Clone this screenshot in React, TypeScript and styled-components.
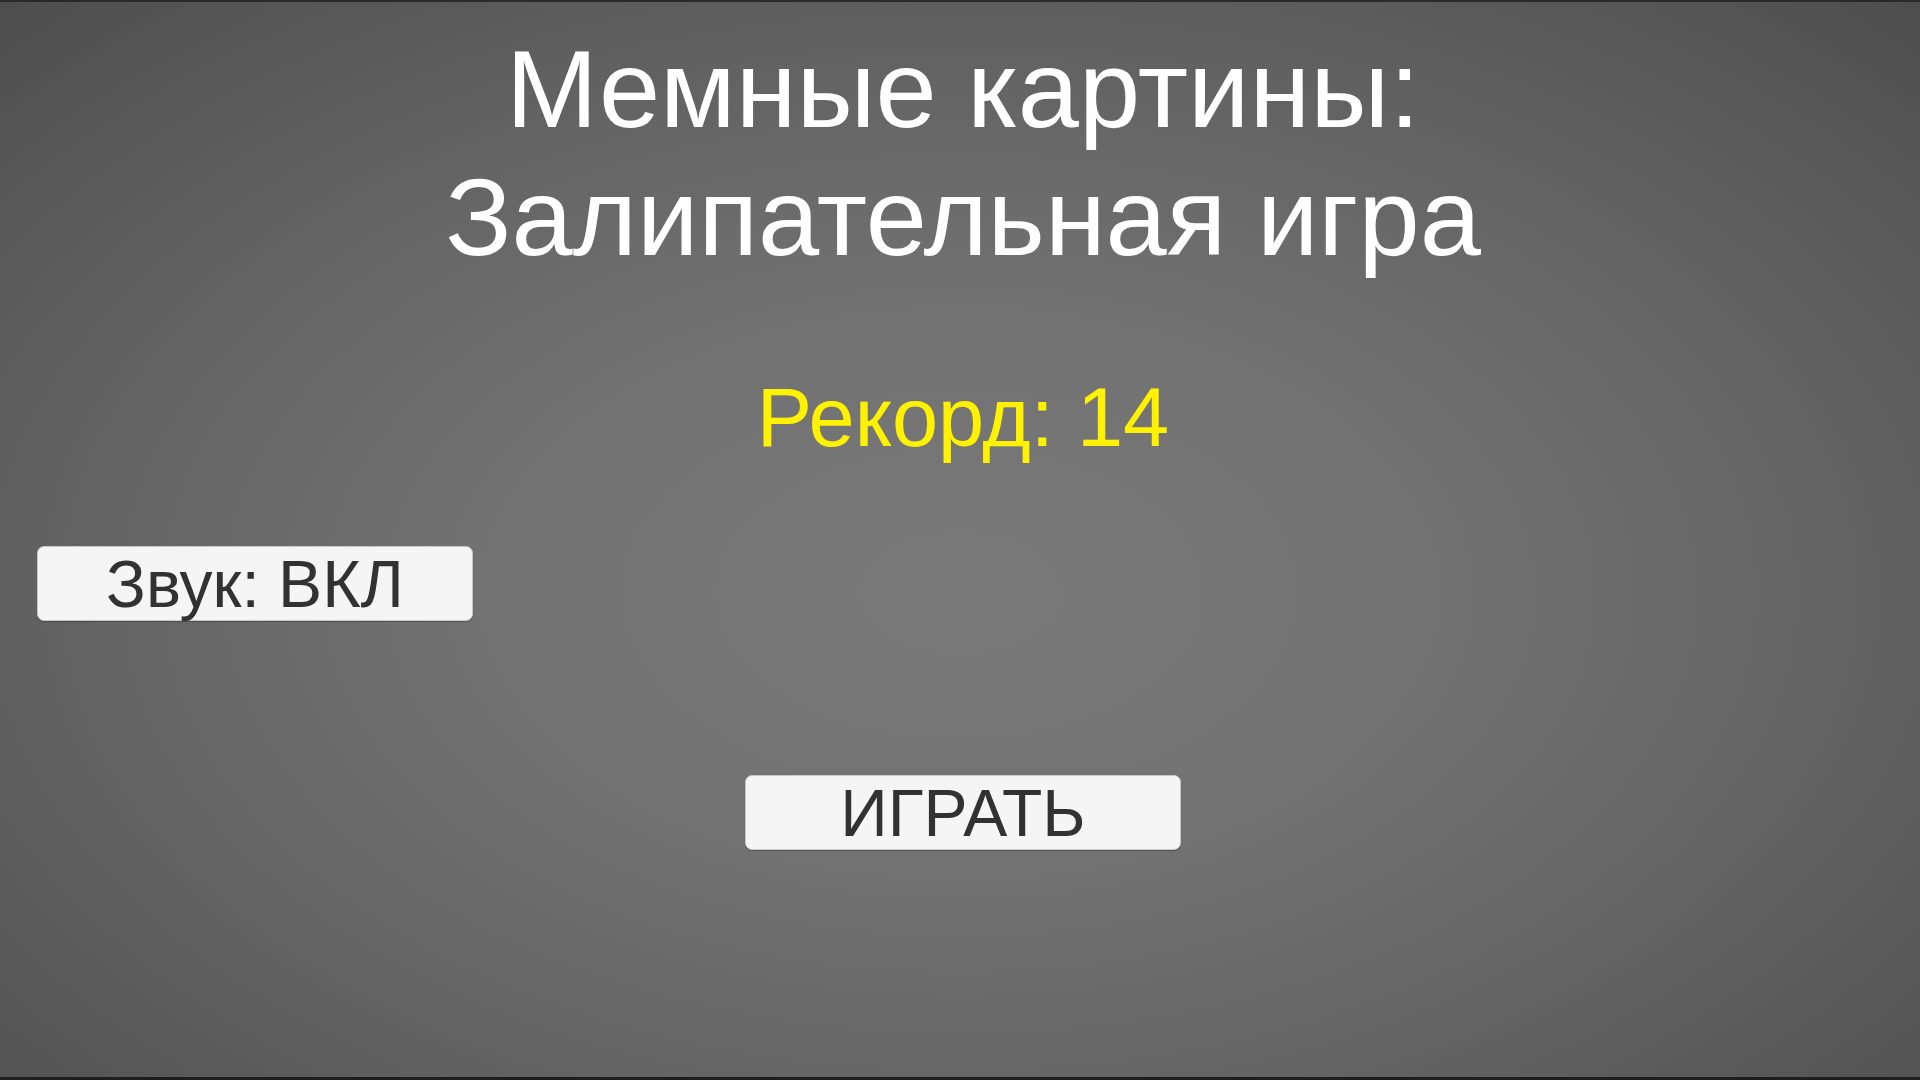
import styled, { createGlobalStyle } from "styled-components";

const GlobalStyle = createGlobalStyle`
  html, body {
    margin: 0;
    padding: 0;
    background: #4a4a4a;
  }
`;

const Screen = styled.div`
  width: 1920px;
  height: 1080px;
  box-sizing: border-box;
  overflow: hidden;
  display: flex;
  flex-direction: column;
  align-items: center;
  padding-left: 6px;
  font-family: "Liberation Sans", Arial, sans-serif;
  background: radial-gradient(
    ellipse 75% 80% at 50% 55%,
    #797979 0%,
    #717171 35%,
    #616161 65%,
    #4b4b4b 100%
  );
  border-top: 2px solid #2a2a2a;
  border-bottom: 3px solid #1e1e1e;
`;

const Title = styled.h1`
  margin: 23px 0 0;
  font-size: 110px;
  font-weight: 400;
  line-height: 128px;
  color: #ffffff;
  text-align: center;
`;

const Record = styled.div`
  margin-top: 95px;
  font-size: 83px;
  line-height: 83px;
  color: #fff200;
`;

const MenuButton = styled.button<{ $align?: "start" | "center" }>`
  align-self: ${(p) => (p.$align === "start" ? "flex-start" : "center")};
  margin-left: ${(p) => (p.$align === "start" ? "31px" : "0")};
  width: 436px;
  height: 75px;
  padding: 0;
  display: flex;
  align-items: center;
  justify-content: center;
  background: #f5f5f5;
  border: 1px solid #c8c8c8;
  border-radius: 7px;
  box-shadow: 0 1px 1px rgba(0, 0, 0, 0.25);
  font-family: inherit;
  font-size: 66px;
  line-height: 66px;
  color: #323232;
  cursor: pointer;
`;

const Spacer = styled.div<{ $h: number }>`
  height: ${(p) => p.$h}px;
  flex-shrink: 0;
`;

export default function App() {
  return (
    <>
      <GlobalStyle />
      <Screen>
        <Title>
          Мемные картины:
          <br />
          Залипательная игра
        </Title>
        <Record>Рекорд: 14</Record>
        <Spacer $h={87} />
        <MenuButton $align="start">Звук: ВКЛ</MenuButton>
        <Spacer $h={154} />
        <MenuButton>ИГРАТЬ</MenuButton>
      </Screen>
    </>
  );
}
